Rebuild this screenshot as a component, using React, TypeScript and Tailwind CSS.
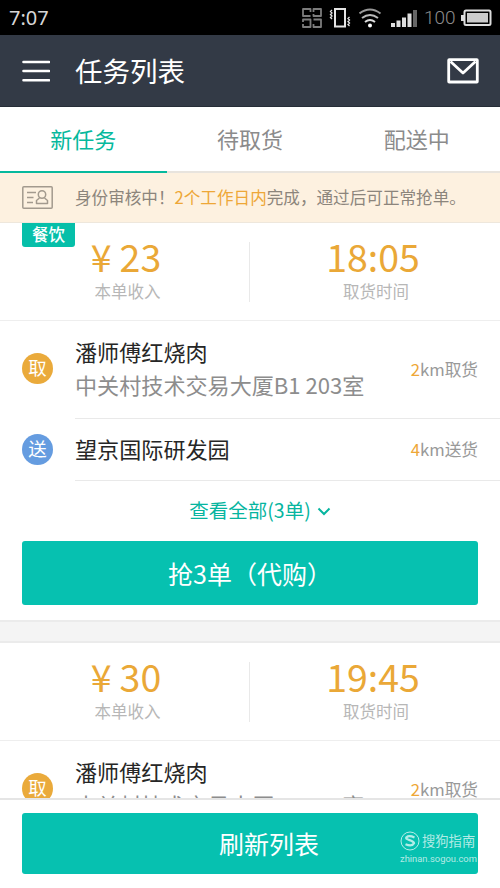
import React from "react";

function StatusBar() {
  return (
    <div className="flex h-[35px] shrink-0 items-center justify-between bg-black pr-[8px] pl-[9px]">
      <span className="font-['Noto_Sans'] text-[20px] leading-[35px] text-[#d6d6d6]">7:07</span>
      <div className="flex items-center">
        <svg className="-mr-[1px]" width="22" height="22" viewBox="0 0 22 22" fill="none" stroke="#7c7c7c" strokeWidth="1.800" strokeLinejoin="round">
          <path d="M8.500 5V2H1v7h7.500M11.500 5V2H19v7h-7.500V7M1 17v3h7.500v-7.500H1V15M11.500 12.500H19V20h-7.500v-3" />
        </svg>
        <svg className="ml-[6px]" width="24" height="22" viewBox="0 0 24 22" fill="none" stroke="#e4e4e4">
          <rect x="6" y="2" width="10" height="17.500" strokeWidth="2" />
          <path d="M3 3l-1.500 1.500L3 6 1.500 7.500 3 9l-1.500 1.500L3 12M20.500 10L19 11.500l1.500 1.500L19 14.500l1.500 1.500L19 17.500l1.500 1.500" strokeWidth="1.300" />
        </svg>
        <svg className="ml-[6px]" width="24" height="22" viewBox="0 0 24 22" fill="none" strokeWidth="2">
          <path d="M0.500 6.500Q11-1.500 21.500 6.500" stroke="#999" />
          <path d="M3 11q8-6 16 0" stroke="#bbb" />
          <path d="M6 15q5-4 10 0" stroke="#ddd" />
          <circle cx="11" cy="18.500" r="2" fill="#fff" />
        </svg>
        <svg className="ml-[8px]" width="28" height="22" viewBox="0 0 28 22" fill="#dedede">
          <rect x="0" y="16" width="4" height="4" />
          <rect x="5.500" y="13.500" width="4" height="6.500" />
          <rect x="11" y="10.500" width="4" height="9.500" />
          <rect x="16.500" y="6.500" width="4" height="13.500" />
          <rect x="22" y="3" width="4" height="17" fill="#666" />
        </svg>
        <span className="ml-[5px] w-[33px] font-['Roboto'] text-[19px] leading-[35px] font-light text-[#8c8c8c]">100</span>
        <svg className="ml-[4px]" width="31" height="18" viewBox="0 0 31 18">
          <rect x="0" y="6" width="3" height="6" fill="#ddd" />
          <rect x="3.500" y="1.500" width="26" height="14.500" rx="1.500" fill="none" stroke="#ddd" strokeWidth="2" />
          <rect x="6" y="4" width="21" height="9.500" fill="#ccc" />
        </svg>
      </div>
    </div>
  );
}

function Header() {
  return (
    <header className="flex h-[72px] shrink-0 items-center border-b border-[#262d37] bg-[#333a46] pr-[21px] pl-[22px]">
      <svg width="28" height="22" viewBox="0 0 28 22" stroke="white" strokeWidth="2.600" strokeLinecap="round">
        <path d="M1.500 2h25.500M1.500 11h25.500M1.500 20.300h25.500" />
      </svg>
      <h1 className="ml-[25px] pb-[2px] text-[27.5px] leading-[40px] text-white">任务列表</h1>
      <svg className="ml-auto" width="32" height="26" viewBox="0 0 32 26" fill="none" stroke="white" strokeWidth="2.800" strokeLinejoin="round">
        <rect x="1.700" y="1.700" width="28.600" height="22.300" rx="0.500" />
        <path d="M3.500 3.500l12.500 11.500L28.500 3.500" />
      </svg>
    </header>
  );
}

function Tabs() {
  const base = "flex h-[66px] flex-1 items-center justify-center border-b-2 pb-[2px] text-[22px]";
  return (
    <nav className="flex shrink-0 bg-white leading-[32px]">
      <div className={`${base} border-[#06b99d] text-[#06b99d]`}>新任务</div>
      <div className={`${base} border-[#e8e4de] text-[#8b8b8b]`}>待取货</div>
      <div className={`${base} border-[#e8e4de] text-[#8b8b8b]`}>配送中</div>
    </nav>
  );
}

function Notice() {
  return (
    <div className="flex h-[50px] shrink-0 items-center border-b border-[#eee7dc] bg-[#fdf1e0] pl-[22px]">
      <svg width="31" height="23" viewBox="0 0 31 23" fill="none" stroke="#a39a8e" strokeWidth="1.500">
        <rect x="0.800" y="0.800" width="29.400" height="21.400" rx="1" />
        <path d="M5 6.500h9M5 11.500h6.500M5 16.500h6" />
        <circle cx="20" cy="8.500" r="3.700" />
        <path d="M17.500 12l-3 2.500v3h11v-3l-3-2.500" strokeLinejoin="round" />
      </svg>
      <p className="ml-[22px] text-[16.6px] leading-[25px] whitespace-nowrap text-[#8c857c]">
        身份审核中！<span className="text-[#eea737]">2个工作日内</span>完成，通过后可正常抢单。
      </p>
    </div>
  );
}

function Stats({ price, time, tag }: { price: string; time: string; tag?: string }) {
  return (
    <div className="relative flex h-[98px] shrink-0 items-center border-b border-[#eeeeee]">
      {tag && (
        <span className="absolute top-0 left-[22px] h-[24px] w-[53px] rounded-b-[3px] bg-[#06bfa9] text-center text-[16.5px] leading-[22px] font-medium text-white">
          {tag}
        </span>
      )}
      <div className="flex w-[249px] flex-col items-center pb-[4px] pl-[6px]">
        <span className="-ml-[3px] flex gap-[8px] text-[37.5px] leading-[38px] whitespace-nowrap text-[#eaa837]">
          <span>¥</span>
          <span>{price}</span>
        </span>
        <span className="mt-[4px] text-[16.5px] leading-[24px] text-[#b7b7b7]">本单收入</span>
      </div>
      <div className="h-[60px] w-px bg-[#e9e9e9]" />
      <div className="flex flex-1 flex-col items-center pb-[4px] pl-[2px]">
        <span className="-ml-[6px] text-[37.5px] leading-[38px] text-[#eaa837]">{time}</span>
        <span className="mt-[4px] text-[16.5px] leading-[24px] text-[#b7b7b7]">取货时间</span>
      </div>
    </div>
  );
}

function Distance({ km, label }: { km: string; label: string }) {
  return (
    <span className="ml-auto text-[16.7px] leading-[24px] text-[#999999]">
      <span className="text-[#eea737]">{km}</span>km{label}
    </span>
  );
}

function Pickup() {
  return (
    <div className="flex h-[98px] shrink-0 items-center pl-[22px]">
      <span className="mb-[4px] h-[31px] w-[31px] rounded-full bg-[#eaaa3b] text-center text-[18.5px] leading-[29px] text-white">取</span>
      <div className="ml-[22px] flex h-full flex-1 items-center border-b border-[#e9e9e9] pr-[22px] pb-[2px]">
        <div className="pb-[2px] whitespace-nowrap">
          <div className="text-[22.1px] leading-[33px] text-[#262626]">潘师傅红烧肉</div>
          <div className="text-[22.1px] leading-[33px] text-[#8d8d8d]">中关村技术交易大厦B1 203室</div>
        </div>
        <Distance km="2" label="取货" />
      </div>
    </div>
  );
}

function Delivery() {
  return (
    <div className="flex h-[62px] shrink-0 items-center pl-[22px]">
      <span className="mb-[2px] h-[31px] w-[31px] rounded-full bg-[#659ce0] text-center text-[18.5px] leading-[29px] text-white">送</span>
      <div className="ml-[22px] flex h-full flex-1 items-center border-b border-[#e9e9e9] pr-[22px] pb-[2px]">
        <span className="text-[22.1px] leading-[33px] text-[#262626]">望京国际研发园</span>
        <Distance km="4" label="送货" />
      </div>
    </div>
  );
}

function Watermark() {
  return (
    <div className="absolute top-[31px] left-[400px] text-white/70">
      <div className="flex items-center gap-[2px]">
        <svg width="20" height="20" viewBox="0 0 20 20" fill="none" stroke="currentColor">
          <circle cx="10" cy="10" r="9" strokeWidth="1" />
          <path d="M14.500 6.500Q9 4 6.500 6.300C4.500 9 14 9 14 12.300Q12 16 5.500 13.200" strokeWidth="2.300" />
        </svg>
        <span className="text-[13.3px] leading-[18px] whitespace-nowrap">搜狗指南</span>
      </div>
      <div className="font-['Roboto'] text-[9.4px] leading-[15px] whitespace-nowrap">zhinan.sogou.com</div>
    </div>
  );
}

export default function App() {
  return (
    <div className="flex h-[888px] w-[500px] flex-col overflow-hidden bg-white font-['Noto_Sans_CJK_SC',sans-serif]">
      <StatusBar />
      <Header />
      <Tabs />
      <Notice />
      <main className="flex min-h-0 flex-1 flex-col overflow-hidden">
        <section className="flex shrink-0 flex-col">
          <Stats price="23" time="18:05" tag="餐饮" />
          <Pickup />
          <Delivery />
          <div className="flex h-[60px] items-center justify-center gap-[6px] pb-[2px] pl-[20px] text-[19.5px] leading-[28px] text-[#06b59f]">
            <span>查看全部(3单)</span>
            <svg className="mt-[2px]" width="14" height="9" viewBox="0 0 14 9" fill="none" stroke="currentColor" strokeWidth="2">
              <path d="M1.500 1.500L7 7l5.500-5.500" />
            </svg>
          </div>
          <button className="mx-[22px] mb-[15px] h-[64px] rounded-[3px] bg-[#06c1b0] text-[25px] leading-[36px] text-white">抢3单（代购）</button>
        </section>
        <div className="h-[23px] shrink-0 border-y-2 border-[#ebebeb] bg-[#f4f4f4]" />
        <section className="flex shrink-0 flex-col">
          <Stats price="30" time="19:45" />
          <Pickup />
        </section>
      </main>
      <footer className="relative h-[90px] shrink-0 border-t-2 border-[#e5e5e5] bg-white px-[22px] pt-[13px]">
        <button className="block h-[61px] w-full rounded-[3px] bg-[#06c1b0] pb-[2px] pl-[38px] text-[25px] leading-[36px] text-white">刷新列表</button>
        <Watermark />
      </footer>
    </div>
  );
}
